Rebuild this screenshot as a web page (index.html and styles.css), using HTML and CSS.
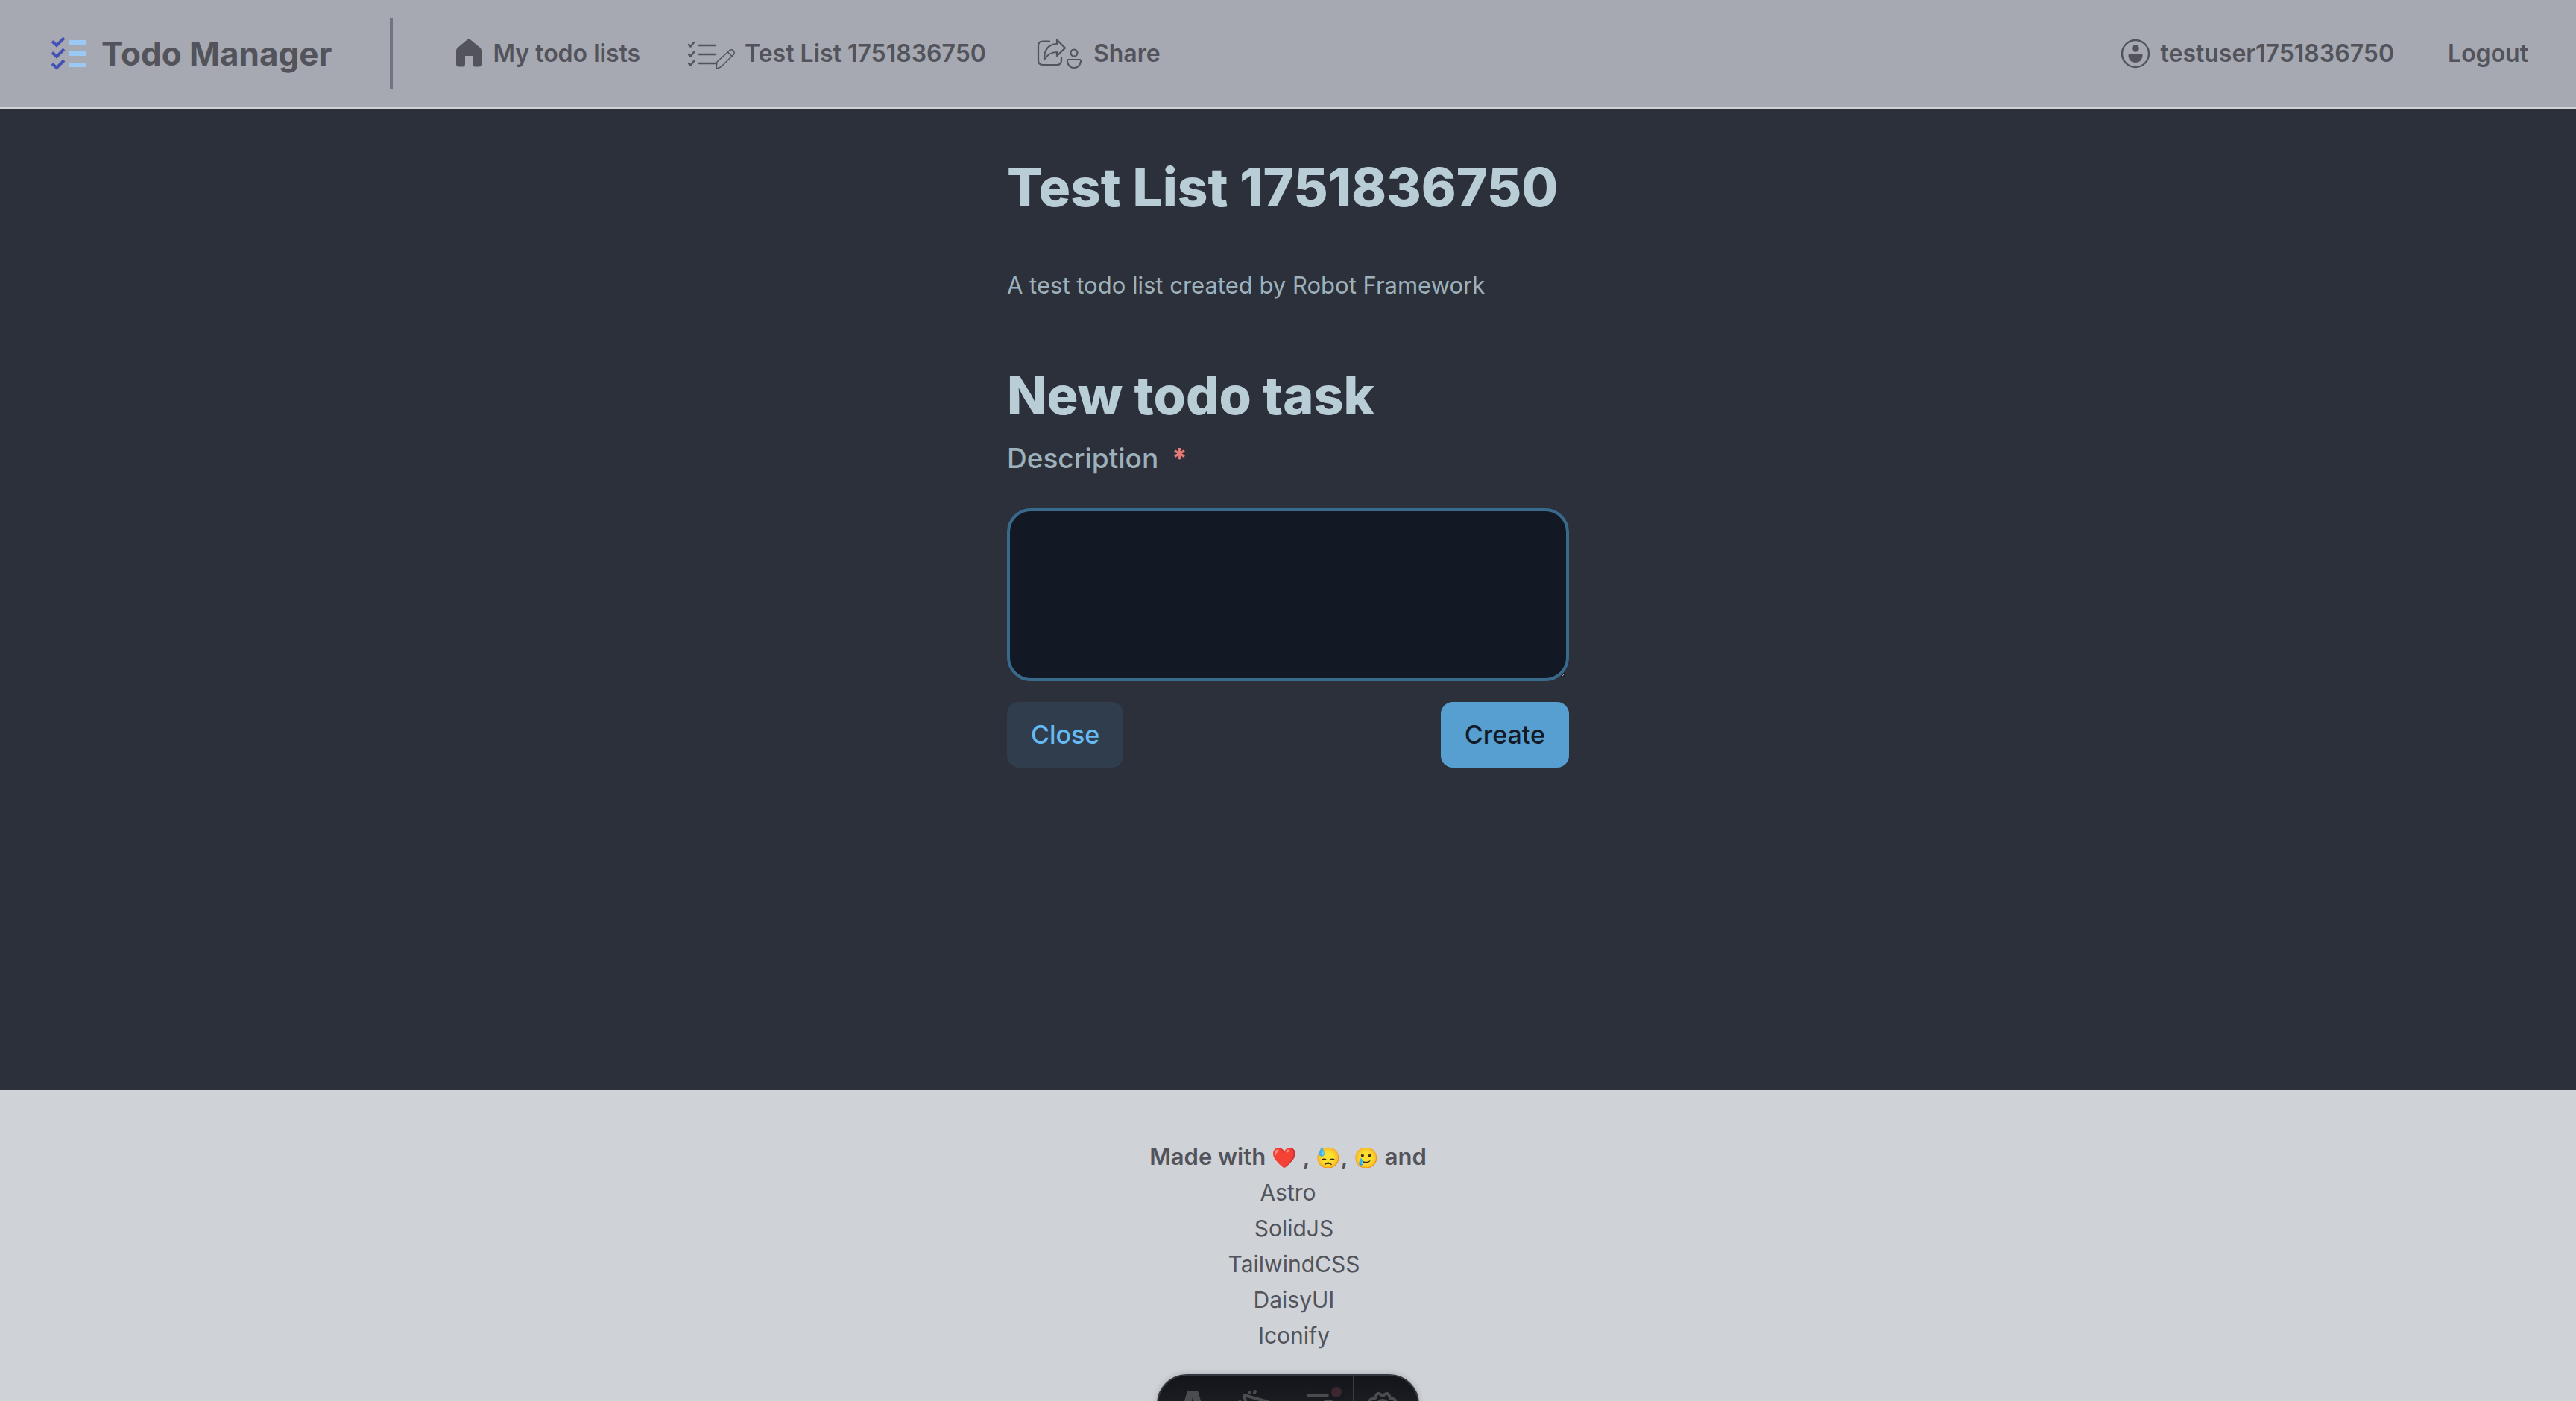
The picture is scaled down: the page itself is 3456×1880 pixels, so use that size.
FILE: index.html
```
<!DOCTYPE html>
<html lang="en">
<head>
<meta charset="utf-8">
<title>Todo Manager</title>
<link rel="stylesheet" href="styles.css">
</head>
<body>
<header class="navbar">
  <a class="brand" href="#">
    <svg width="48" height="48" viewBox="0 0 48 48" aria-hidden="true">
      <g fill="#9bc9f5"><path d="M24 6h24v6H24zM24 21h24v6H24zM24 36h24v6H24z"/></g>
      <g fill="none" stroke="#4452b6" stroke-width="4"><path d="M2 7.500l6 5.500 10-10M2 22.500l6 5.500 10-10M2 37.500l6 5.500 10-10"/></g>
    </svg>
    Todo Manager
  </a>
  <nav class="links" aria-label="Main">
    <a class="link" href="#">
      <svg width="42" height="44" viewBox="0 0 42 44" aria-hidden="true"><path fill="currentColor" d="M19.500 3.800Q22 1.800 24.500 3.800L37 14Q39 15.800 39 18V36Q39 39.500 35.500 39.500H30.500Q27 39.500 27 36V25H17V36Q17 39.500 13.500 39.500H8.500Q5 39.500 5 36V18Q5 15.800 7 14Z"/></svg>
      My todo lists
    </a>
    <a class="link" href="#">
      <svg width="64" height="46" viewBox="0 0 64 46" fill="none" stroke="currentColor" stroke-linecap="round" stroke-linejoin="round" aria-hidden="true">
        <path stroke-width="2.500" d="M1 11l2.500 2.500L8 8M1 24l2.500 2.500L8 21M1 36l2.500 2.500L8 33M15 12h22M15 24h22M15 36h22"/>
        <path stroke-width="1.500" d="M38 43L39 34L56 18.500Q59 17 61 19Q63 21.500 61.500 24L45 40Q43 42 38 43ZM53.500 21l6 6"/>
      </svg>
      Test List 1751836750
    </a>
    <a class="link" href="#">
      <svg width="68" height="46" viewBox="0 0 68 46" fill="none" stroke="currentColor" stroke-width="2.200" stroke-linecap="round" stroke-linejoin="round" aria-hidden="true">
        <path d="M21 6.500H12Q6 6.500 6 12.500V32Q6 38 12 38H31Q37 38 37 32V28"/>
        <path d="M31 4.500L42 15.500L31 26V21Q20 21 14 31Q13.500 11 31 10Z"/>
        <circle cx="54" cy="22" r="4.500"/>
        <path d="M47 31H61Q63.500 31 63 34Q61 42 54 42Q47 42 45 34Q44.500 31 47 31Z"/>
      </svg>
      Share
    </a>
  </nav>
  <div class="account">
    <a class="link" href="#">
      <svg width="40" height="40" viewBox="0 0 40 40" aria-hidden="true">
        <circle cx="19" cy="20" r="18" fill="none" stroke="currentColor" stroke-width="2.400"/>
        <circle cx="19" cy="13" r="4.800" fill="currentColor"/>
        <path fill="currentColor" d="M12 20H26Q29 20 28.500 23.500Q27 32 19 32Q11 32 9.500 23.500Q9 20 12 20Z"/>
      </svg>
      testuser1751836750
    </a>
    <a class="link" href="#">Logout</a>
  </div>
</header>
<main class="main">
  <div class="column">
    <h1 class="list-title">Test List 1751836750</h1>
    <p class="list-note">A test todo list created by Robot Framework</p>
    <form class="task-form">
      <h2 class="form-title">New todo task</h2>
      <label class="label" for="description">Description <span class="required">*</span></label>
      <textarea class="textarea" id="description" name="description" required></textarea>
      <div class="actions">
        <button class="button button-soft" type="button">Close</button>
        <button class="button button-primary" type="submit">Create</button>
      </div>
    </form>
  </div>
</main>
<footer class="footer">
  <p class="made-with">Made with <span class="emoji">❤️</span> , <span class="emoji">😓</span>, <span class="emoji">🥲</span> and</p>
  <a href="#">Astro</a>
  <a class="indent" href="#">SolidJS</a>
  <a class="indent" href="#">TailwindCSS</a>
  <a class="indent" href="#">DaisyUI</a>
  <a class="indent" href="#">Iconify</a>
</footer>
<div class="toolbar">
  <button type="button" aria-label="Menu"><svg viewBox="0 0 86 76"><path fill="#4b4c50" d="M39 20h14L63 54Q56 50 52 50L46 29L40 50Q36 50 29 54Z"/></svg></button>
  <button type="button" aria-label="Inspect"><svg viewBox="0 0 86 76" fill="none" stroke="#4b4c50" stroke-width="4" stroke-linecap="round" stroke-linejoin="round"><path d="M60 35L28 26L36 58L44 46ZM36 23v-1M42 23l1-2M23 35h-1"/></svg></button>
  <button type="button" aria-label="Audit"><svg viewBox="0 0 86 76"><path fill="none" stroke="#4b4c50" stroke-width="4" stroke-linecap="round" d="M27 26H53M27 38H42M27 50H42"/><circle cx="54" cy="43" r="9" fill="none" stroke="#4b4c50" stroke-width="4"/><circle cx="65" cy="22" r="11" fill="#18191e"/><circle cx="65" cy="22" r="7" fill="#3c2630"/></svg></button>
  <button class="settings" type="button" aria-label="Settings"><svg viewBox="0 0 86 76" fill="none" stroke="#4b4c50" stroke-width="4"><path stroke-linejoin="round" d="M35 25L38 27L41 25Q45 22 47 27L48 30L52 31Q56 32 55 36L53 40L55 44Q56 48 52 49L48 50L47 53Q45 58 41 55L38 53L35 55Q31 58 29 53L28 50L24 49Q20 48 21 44L23 40L21 36Q20 32 24 31L28 30L29 27Q31 22 35 25Z"/><circle cx="38" cy="41" r="8"/></svg></button>
</div>
</body>
</html>
```
FILE: styles.css
```
* {
  box-sizing: border-box;
  margin: 0;
}

body {
  display: flex;
  flex-direction: column;
  min-height: 100vh;
  background: #2b303b;
  color: #52535b;
  font-family: Inter, "Noto Sans", sans-serif;
  font-size: 31px;
  line-height: 48px;
}

a {
  color: inherit;
  text-decoration: none;
}

svg {
  flex: none;
}

.navbar {
  display: flex;
  align-items: center;
  padding: 24px 64px 24px 68px;
  border-bottom: 2px solid #cfd3d8;
  background: #a6a9b1;
  font-size: 32px;
  font-weight: 600;
  white-space: nowrap;
}

.brand {
  display: flex;
  align-items: center;
  gap: 20px;
  font-size: 44px;
  font-weight: 700;
}

.links {
  display: flex;
  align-items: center;
  gap: 64px;
  height: 96px;
  margin-left: 78px;
  padding-left: 80px;
  border-left: 4px solid #707680;
}

.link {
  display: flex;
  align-items: center;
  gap: 12px;
}

.account {
  display: flex;
  gap: 72px;
  margin-left: auto;
}

.main {
  min-height: 70vh;
  padding: 65px 32px;
}

.column {
  max-width: 754px;
  margin: 0 auto;
  color: #9eb1ba;
}

.list-title,
.form-title {
  color: #b8cdd6;
  font-size: 71px;
  font-weight: 800;
  line-height: 80px;
  white-space: nowrap;
}

.form-title {
  font-size: 70px;
}

.list-note {
  margin: 68px 0 84px;
}

.label {
  display: block;
  margin: 20px 0 43px;
  font-size: 37px;
  font-weight: 500;
}

.required {
  margin-left: 8px;
  color: #e87b78;
  font-weight: 700;
}

.textarea {
  display: block;
  width: 100%;
  height: 232px;
  padding: 16px 32px;
  border: 4px solid #386a8c;
  border-radius: 32px;
  outline: none;
  background: #121824;
  color: #b8cdd6;
  font: inherit;
}

.actions {
  display: flex;
  justify-content: space-between;
  margin-top: 28px;
}

.button {
  height: 88px;
  padding: 0 32px;
  border: 0;
  border-radius: 16px;
  font: 500 34px/48px Inter, "Noto Sans", sans-serif;
}

.button-soft {
  background: #303d4d;
  color: #66bbf4;
}

.button-primary {
  background: #569fd0;
  color: #131a26;
}

.footer {
  display: flex;
  flex: 1;
  flex-direction: column;
  align-items: center;
  padding: 66px 32px 48px;
  background: #cfd2d7;
  font-size: 30px;
}

.made-with {
  height: 48px;
  font-size: 31px;
  font-weight: 600;
}

.emoji {
  font-size: 27px;
}

.indent {
  padding-left: 16px;
}

.toolbar {
  position: fixed;
  bottom: -44px;
  left: 50%;
  display: flex;
  height: 80px;
  overflow: hidden;
  border: 2px solid #343841;
  border-radius: 40px;
  background: linear-gradient(#13151a, #24252b);
  box-shadow: 0 0 8px #0003;
  transform: translateX(-50%);
}

.toolbar button {
  width: 87px;
  padding: 0;
  border: 0;
  background: none;
}

.toolbar svg {
  display: block;
  width: 86px;
  height: 76px;
}

.toolbar .settings {
  border-left: 2px solid #3a3c44;
}
```
